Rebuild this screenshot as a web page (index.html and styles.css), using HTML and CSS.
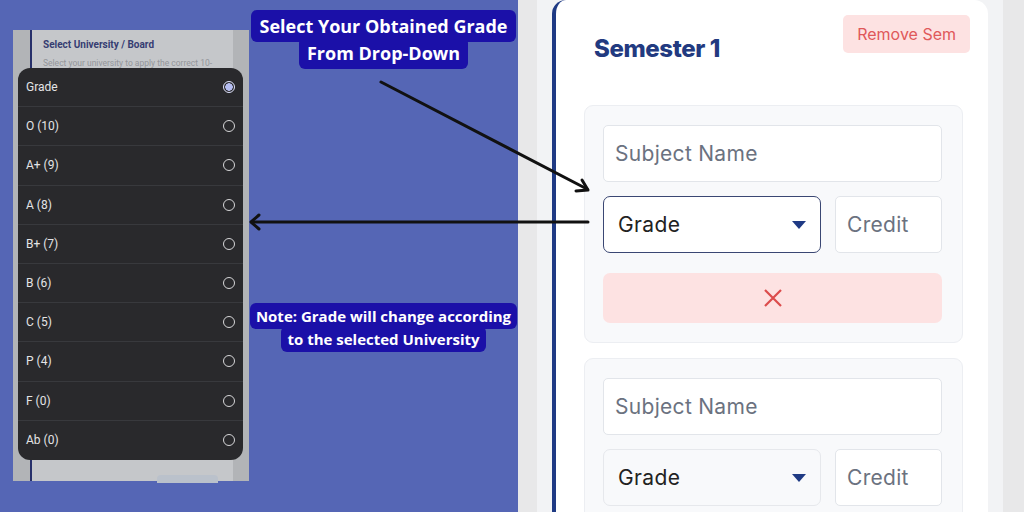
FILE: index.html
```html
<!DOCTYPE html>
<html lang="en">
<head>
    <meta charset="UTF-8">
    <meta name="viewport" content="width=device-width, initial-scale=1.0">
    <title>Grade Drop-Down Guide</title>
    <link rel="stylesheet" href="styles.css">
</head>
<body>
    <div class="page">
        <section class="left">
            <div class="phone">
                <div class="phone-card">
                    <h4 class="phone-title">Select University / Board</h4>
                    <p class="phone-sub">Select your university to apply the correct 10-</p>
                    <div class="phone-btn"></div>
                </div>

                <ul class="picker">
                    <li class="option">Grade <span class="radio checked"></span></li>
                    <li class="option">O (10) <span class="radio"></span></li>
                    <li class="option">A+ (9) <span class="radio"></span></li>
                    <li class="option">A (8) <span class="radio"></span></li>
                    <li class="option">B+ (7) <span class="radio"></span></li>
                    <li class="option">B (6) <span class="radio"></span></li>
                    <li class="option">C (5) <span class="radio"></span></li>
                    <li class="option">P (4) <span class="radio"></span></li>
                    <li class="option">F (0) <span class="radio"></span></li>
                    <li class="option">Ab (0) <span class="radio"></span></li>
                </ul>
            </div>

            <div class="notes">
                <p class="tag tag-top"><span>Select Your Obtained Grade<br>From Drop-Down</span></p>
                <p class="tag tag-note"><span>Note: Grade will change according<br>to the selected University</span></p>
            </div>
        </section>

        <section class="right">
            <div class="screen">
                <div class="sem-card">
                    <div class="sem-head">
                        <h2 class="sem-title">Semester 1</h2>
                        <div class="btn-remove-sem">Remove Sem</div>
                    </div>

                    <div class="subjects">
                        <div class="subject">
                            <div class="field">Subject Name</div>
                            <div class="row">
                                <div class="select focused">Grade <span class="caret"></span></div>
                                <div class="field credit">Credit</div>
                            </div>
                            <div class="remove-row">
                                <svg width="20" height="20" viewBox="0 0 20 20"><path d="M2 2 L18 18 M18 2 L2 18" stroke="#dc4c4c" stroke-width="2.2" fill="none"/></svg>
                            </div>
                        </div>

                        <div class="subject">
                            <div class="field">Subject Name</div>
                            <div class="row">
                                <div class="select">Grade <span class="caret"></span></div>
                                <div class="field credit">Credit</div>
                            </div>
                        </div>
                    </div>
                </div>
            </div>
        </section>

        <!-- pointer arrows drawn over both halves -->
        <svg class="arrows" width="1024" height="512" viewBox="0 0 1024 512">
            <g stroke="#111" stroke-width="3" fill="none" stroke-linecap="round" stroke-linejoin="round">
                <path d="M381 82 L587 189"/>
                <path d="M576 191 L588 190 L582 180"/>
                <path d="M588 222 L252 222"/>
                <path d="M259 215 L251 222 L259 229"/>
            </g>
        </svg>
    </div>
</body>
</html>
```

FILE: styles.css
```css
body {
    margin: 0;
    font-family: Inter, "Noto Sans", sans-serif;
}
.page {
    position: relative;
    display: flex;
    width: 1024px;
    height: 512px;
    overflow: hidden;
}

/* left half: phone screenshot + notes */
.left {
    display: flex;
    align-items: flex-start;
    width: 518px;
    background-color: #5566b5;
}
.phone {
    position: relative;
    display: flex;
    width: 236px;
    height: 451px;
    margin: 30px 0 0 13px;
    padding: 0 16px 0 17px;
    box-sizing: border-box;
    background-color: #b2b4b7;
    font-family: Roboto, "Liberation Sans", sans-serif;
}
.phone-card {
    flex: 1;
    display: flex;
    flex-direction: column;
    padding: 8px 11px 0 11px;
    border-left: 2px solid #27306a;
    background-color: #c5c7ca;
}
.phone-title {
    margin: 0;
    font-size: 10px;
    line-height: 13px;
    font-weight: 700;
    color: #363d72;
}
.phone-sub {
    margin: 7px 0 0 0;
    font-size: 8.5px;
    line-height: 11px;
    color: #94969a;
}
.phone-btn {
    width: 61px;
    height: 8px;
    margin: auto 0 -2px 114px;
    border-radius: 4px 4px 0 0;
    background-color: #bac1cb;
}
.picker {
    position: absolute;
    left: 5px;
    top: 38px;
    width: 225px;
    margin: 0;
    padding: 0;
    list-style: none;
    border-radius: 12px;
    background-color: #29292c;
    overflow: hidden;
}
.option {
    display: flex;
    justify-content: space-between;
    align-items: center;
    height: 39.2px;
    padding: 0 8px 0 8px;
    box-sizing: border-box;
    border-bottom: 1px solid #38393d;
    font-size: 12px;
    color: #e4e4e6;
}
.option:last-child {
    border-bottom: none;
}
.radio {
    width: 12px;
    height: 12px;
    box-sizing: border-box;
    border: 1.5px solid #d6d6d8;
    border-radius: 50%;
}
.radio.checked {
    border-color: #dfe2fb;
    background: radial-gradient(circle, #b5bdf1 0 3.5px, transparent 4px);
}

.notes {
    flex: 1;
    padding-top: 13px;
}
.tag {
    margin: 0;
    text-align: center;
    font-family: "Open Sans", sans-serif;
    font-weight: 700;
    color: #fff;
}
.tag span {
    background-color: #1b10a8;
    border-radius: 6px;
    -webkit-box-decoration-break: clone;
    box-decoration-break: clone;
}
.tag-top {
    font-size: 18px;
    line-height: 27px;
}
.tag-top span {
    padding: 4px 8px;
}
.tag-note {
    margin-top: 238px;
    font-size: 15px;
    line-height: 23px;
}
.tag-note span {
    padding: 3px 6px;
}

/* right half: app screen */
.right {
    flex: 1;
    display: flex;
    padding: 0 21px 0 19px;
    background-color: #e8e8e9;
}
.screen {
    flex: 1;
    padding: 0 15px;
    background-color: #f2f3f5;
}
.sem-card {
    height: 100%;
    border-left: 4px solid #1f3a84;
    border-radius: 14px 14px 0 0;
    background-color: #fff;
}
.sem-head {
    display: flex;
    justify-content: space-between;
    align-items: flex-start;
    height: 105px;
    padding: 15px 18px 0 38px;
    box-sizing: border-box;
}
.sem-title {
    margin: 19px 0 0 0;
    font-size: 24px;
    line-height: 30px;
    font-weight: 800;
    letter-spacing: -0.4px;
    color: #223a80;
}
.btn-remove-sem {
    padding: 0 14px;
    height: 38px;
    line-height: 38px;
    border-radius: 5px;
    background-color: #fde2e2;
    color: #e0585a;
    font-size: 16px;
}
.subjects {
    display: flex;
    flex-direction: column;
    gap: 15px;
    padding: 0 25px 0 28px;
}
.subject {
    display: flex;
    flex-direction: column;
    gap: 14px;
    padding: 19px 20px 19px 18px;
    border: 1px solid #eceef2;
    border-radius: 9px;
    background-color: #f8f9fb;
}
.field {
    display: flex;
    align-items: center;
    height: 57px;
    padding: 0 11px;
    box-sizing: border-box;
    border: 1px solid #e2e5ea;
    border-radius: 5px;
    background-color: #fff;
    font-size: 21px;
    letter-spacing: 0.3px;
    color: #6b7280;
}
.row {
    display: flex;
    gap: 14px;
}
.select {
    display: flex;
    justify-content: space-between;
    align-items: center;
    width: 218px;
    height: 57px;
    padding: 0 14px;
    box-sizing: border-box;
    border: 1px solid #e6e8ec;
    border-radius: 7px;
    background-color: #f8f9fb;
    font-size: 21px;
    letter-spacing: 0.4px;
    color: #222;
}
.select.focused {
    border-color: #3a4773;
    background-color: #fff;
}
.caret {
    width: 0;
    height: 0;
    border-left: 7.5px solid transparent;
    border-right: 7.5px solid transparent;
    border-top: 8px solid #1f3a84;
}
.credit {
    flex: 1;
}
.remove-row {
    display: flex;
    justify-content: center;
    align-items: center;
    height: 50px;
    margin-top: 6px;
    border-radius: 7px;
    background-color: #fde2e2;
}

.arrows {
    position: absolute;
    left: 0;
    top: 0;
    pointer-events: none;
}
```
